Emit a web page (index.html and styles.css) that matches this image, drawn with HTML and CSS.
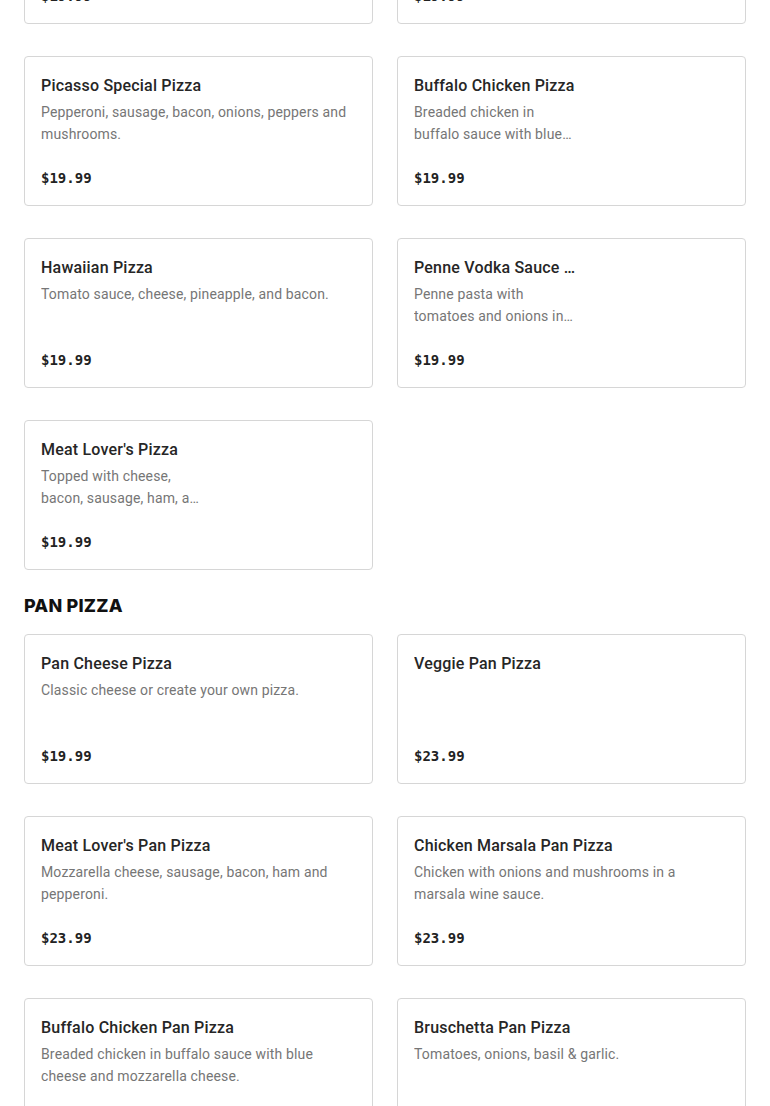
FILE: index.html
```html
<!DOCTYPE html>
<html lang="en">
<head>
<meta charset="utf-8">
<title>Menu</title>
<link rel="stylesheet" href="styles.css">
</head>
<body>
<main class="page">
  <section class="grid grid--first">
    <article class="card">
      <h3 class="card-title">Sicilian Pizza</h3>
      <p class="card-desc">Thick crust square pizza with tomato sauce and cheese.</p>
      <p class="card-price">$19.99</p>
    </article>
    <article class="card">
      <h3 class="card-title">White Pizza</h3>
      <p class="card-desc">Ricotta, mozzarella and garlic.</p>
      <p class="card-price">$19.99</p>
    </article>
    <article class="card">
      <h3 class="card-title">Picasso Special Pizza</h3>
      <p class="card-desc">Pepperoni, sausage, bacon, onions, peppers and mushrooms.</p>
      <p class="card-price">$19.99</p>
    </article>
    <article class="card card--narrow">
      <h3 class="card-title">Buffalo Chicken Pizza</h3>
      <p class="card-desc">Breaded chicken in buffalo sauce with blue cheese and mozzarella cheese.</p>
      <p class="card-price">$19.99</p>
    </article>
    <article class="card">
      <h3 class="card-title">Hawaiian Pizza</h3>
      <p class="card-desc">Tomato sauce, cheese, pineapple, and bacon.</p>
      <p class="card-price">$19.99</p>
    </article>
    <article class="card card--narrow">
      <h3 class="card-title">Penne Vodka Sauce Pizza</h3>
      <p class="card-desc">Penne pasta with tomatoes and onions in vodka sauce.</p>
      <p class="card-price">$19.99</p>
    </article>
    <article class="card card--narrow">
      <h3 class="card-title">Meat Lover's Pizza</h3>
      <p class="card-desc">Topped with cheese, bacon, sausage, ham, and pepperoni.</p>
      <p class="card-price">$19.99</p>
    </article>
  </section>

  <h2 class="section-title">PAN PIZZA</h2>
  <section class="grid">
    <article class="card">
      <h3 class="card-title">Pan Cheese Pizza</h3>
      <p class="card-desc">Classic cheese or create your own pizza.</p>
      <p class="card-price">$19.99</p>
    </article>
    <article class="card">
      <h3 class="card-title">Veggie Pan Pizza</h3>
      <p class="card-desc"></p>
      <p class="card-price">$23.99</p>
    </article>
    <article class="card">
      <h3 class="card-title">Meat Lover's Pan Pizza</h3>
      <p class="card-desc">Mozzarella cheese, sausage, bacon, ham and pepperoni.</p>
      <p class="card-price">$23.99</p>
    </article>
    <article class="card">
      <h3 class="card-title">Chicken Marsala Pan Pizza</h3>
      <p class="card-desc">Chicken with onions and mushrooms in a marsala wine sauce.</p>
      <p class="card-price">$23.99</p>
    </article>
    <article class="card">
      <h3 class="card-title">Buffalo Chicken Pan Pizza</h3>
      <p class="card-desc">Breaded chicken in buffalo sauce with blue cheese and mozzarella cheese.</p>
      <p class="card-price">$23.99</p>
    </article>
    <article class="card">
      <h3 class="card-title">Bruschetta Pan Pizza</h3>
      <p class="card-desc">Tomatoes, onions, basil &amp; garlic.</p>
      <p class="card-price">$23.99</p>
    </article>
  </section>
</main>
</body>
</html>
```

FILE: styles.css
```css
* { box-sizing: border-box; }

html, body {
  margin: 0;
  padding: 0;
  background: #ffffff;
}

body {
  font-family: "Roboto", "Liberation Sans", sans-serif;
  color: #2a2a2a;
}

.page {
  padding: 0 24px 40px;
}

.grid {
  display: grid;
  grid-template-columns: 1fr 1fr;
  column-gap: 24px;
  row-gap: 32px;
}

.grid--first {
  margin-top: -126px;
}

.card {
  height: 150px;
  border: 1px solid #d6d6d6;
  border-radius: 4px;
  padding: 17px 16px 17px;
  display: flex;
  flex-direction: column;
  background: #fff;
}

.card-title {
  margin: 0;
  font-size: 16px;
  line-height: 24px;
  font-weight: 500;
  letter-spacing: 0.2px;
  color: #262626;
  white-space: nowrap;
  overflow: hidden;
  text-overflow: ellipsis;
}

.card-desc {
  margin: 3px 0 0;
  font-size: 14px;
  line-height: 22px;
  letter-spacing: 0.15px;
  color: #767676;
  display: -webkit-box;
  -webkit-box-orient: vertical;
  -webkit-line-clamp: 2;
  overflow: hidden;
}

.card--narrow .card-title,
.card--narrow .card-desc {
  max-width: 165px;
}

.card-price {
  margin: auto 0 0;
  font-family: "DejaVu Sans Mono", "Liberation Mono", monospace;
  font-weight: 700;
  font-size: 14px;
  line-height: 20px;
  color: #222;
}

.section-title {
  margin: 24px 0 16px;
  font-family: "Inter", "Liberation Sans", sans-serif;
  font-weight: 800;
  font-size: 18px;
  line-height: 24px;
  color: #111;
  letter-spacing: 0.2px;
}
```
